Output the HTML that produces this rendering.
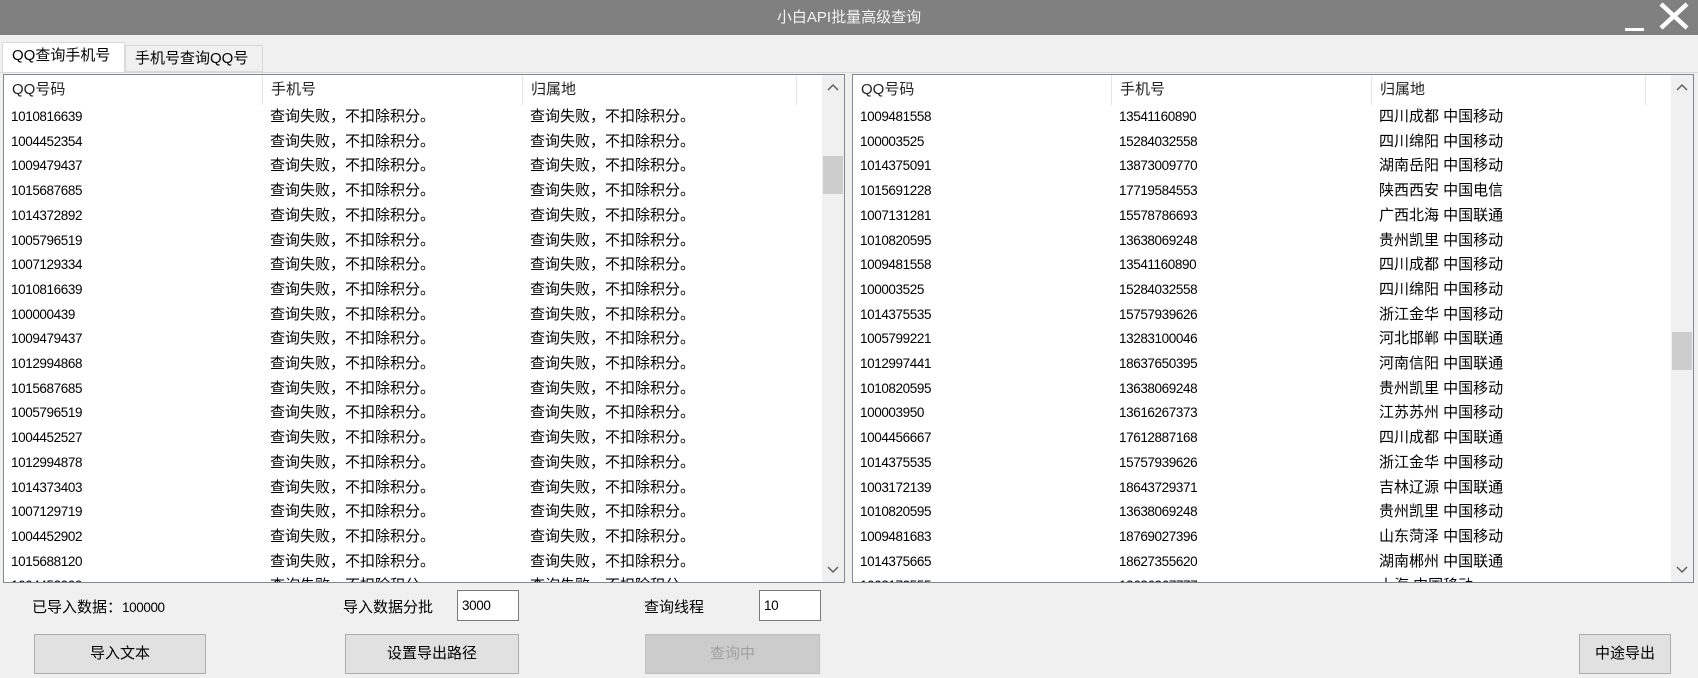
<!DOCTYPE html><html><head><meta charset="utf-8"><style>
*{margin:0;padding:0;box-sizing:border-box}
body{width:1698px;height:678px;background:#f0f0f0;position:relative;overflow:hidden;font-family:"Liberation Sans","Noto Sans CJK SC",sans-serif;color:#000}
.a{position:absolute}
.title{left:0;top:0;width:1698px;height:35px;background:#808080;color:#f4f4f4;font-size:15px;text-align:center;line-height:35px}
.tab{border:1px solid #d9d9d9;font-size:15px;line-height:26px;padding-left:9px}
.list{background:#fff;border:1px solid #828790;overflow:hidden}
.hd{position:absolute;top:0;height:30px;font-size:15px;line-height:30px;color:#222;border-right:1px solid #e5e5e5}
.row{position:absolute;height:24.7px;font-size:15px;line-height:24px;white-space:nowrap}
.num{font-size:13.5px;letter-spacing:-0.4px}
.sb{position:absolute;top:0;bottom:0;width:22px;background:#f0f0f0}
.th{position:absolute;left:1px;width:20px;background:#cdcdcd}
.btn{background:#e1e1e1;border:1px solid #adadad;font-size:15px;text-align:center;line-height:37px}
.inp{background:#fff;border:1px solid #7a7a7a;font-size:13.5px;line-height:29px;padding-left:4px}
.lbl{font-size:15px}
</style></head><body>
<div class="a title">小白API批量高级查询</div>
<div class="a" style="left:1625px;top:28px;width:19px;height:3px;background:#fff"></div>
<svg class="a" style="left:1657px;top:2px" width="34" height="28"><path d="M4 2L30 26M30 2L4 26" stroke="#fff" stroke-width="4.5"/></svg>
<div class="a tab" style="left:2px;top:42px;width:123px;height:30px;background:#fff;border-bottom:none">QQ查询手机号</div>
<div class="a tab" style="left:125px;top:45px;width:138px;height:27px;background:#f0f0f0">手机号查询QQ号</div>
<div class="a" style="left:0;top:72px;width:1698px;height:1px;background:#d9d9d9"></div>

<div class="a list" id="L" style="left:3px;top:74px;width:842px;height:509px"></div>
<div class="a list" id="R" style="left:852px;top:74px;width:842px;height:509px"></div>

<div class="a lbl" style="left:32px;top:596px">已导入数据：<span class="num">100000</span></div>
<div class="a lbl" style="left:343px;top:596px">导入数据分批</div>
<div class="a inp num" style="left:457px;top:590px;width:62px;height:31px">3000</div>
<div class="a lbl" style="left:644px;top:596px">查询线程</div>
<div class="a inp num" style="left:759px;top:590px;width:62px;height:31px">10</div>
<div class="a btn" style="left:34px;top:634px;width:172px;height:40px">导入文本</div>
<div class="a btn" style="left:345px;top:634px;width:174px;height:40px">设置导出路径</div>
<div class="a btn" style="left:645px;top:634px;width:175px;height:40px;background:#cccccc;border-color:#bfbfbf;color:#a0a0a0">查询中</div>
<div class="a btn" style="left:1579px;top:634px;width:92px;height:40px">中途导出</div>

<script>
function build(id,rows,thumbTop){
 var el=document.getElementById(id),h='';
 var cx=[0,259,519],cw=[259,260,274];
 var names=['QQ号码','手机号','归属地'];
 for(var i=0;i<3;i++)h+='<div class="hd" style="left:'+cx[i]+'px;width:'+cw[i]+'px;padding-left:8px">'+names[i]+'</div>';
 rows.forEach(function(r,k){var y=30+k*24.7;
  for(var i=0;i<3;i++)h+='<div class="row'+(i==0||(id=='R'&&i==1)?' num':'')+'" style="left:'+(cx[i]+7)+'px;top:'+y+'px">'+r[i]+'</div>';});
 h+='<div class="sb" style="right:0"><svg style="position:absolute;left:5px;top:8px" width="12" height="8"><path d="M1 7L6 2L11 7" stroke="#606060" stroke-width="1.5" fill="none"/></svg><div class="th" style="top:'+thumbTop+'px;height:38px"></div><svg style="position:absolute;left:5px;bottom:8px" width="12" height="8"><path d="M1 1L6 6L11 1" stroke="#606060" stroke-width="1.5" fill="none"/></svg></div>';
 el.innerHTML=h;}
var f='查询失败，不扣除积分。';
var lq='1010816639 1004452354 1009479437 1015687685 1014372892 1005796519 1007129334 1010816639 100000439 1009479437 1012994868 1015687685 1005796519 1004452527 1012994878 1014373403 1007129719 1004452902 1015688120 1004452999'.split(' ');
build('L',lq.map(function(q){return[q,f,f]}),81);
var rd=[['1009481558','13541160890','四川成都 中国移动'],['100003525','15284032558','四川绵阳 中国移动'],['1014375091','13873009770','湖南岳阳 中国移动'],['1015691228','17719584553','陕西西安 中国电信'],['1007131281','15578786693','广西北海 中国联通'],['1010820595','13638069248','贵州凯里 中国移动'],['1009481558','13541160890','四川成都 中国移动'],['100003525','15284032558','四川绵阳 中国移动'],['1014375535','15757939626','浙江金华 中国移动'],['1005799221','13283100046','河北邯郸 中国联通'],['1012997441','18637650395','河南信阳 中国联通'],['1010820595','13638069248','贵州凯里 中国移动'],['100003950','13616267373','江苏苏州 中国移动'],['1004456667','17612887168','四川成都 中国联通'],['1014375535','15757939626','浙江金华 中国移动'],['1003172139','18643729371','吉林辽源 中国联通'],['1010820595','13638069248','贵州凯里 中国移动'],['1009481683','18769027396','山东菏泽 中国移动'],['1014375665','18627355620','湖南郴州 中国联通'],['1003172555','13636367777','上海 中国移动']];
build('R',rd,257);
</script>
</body></html>
